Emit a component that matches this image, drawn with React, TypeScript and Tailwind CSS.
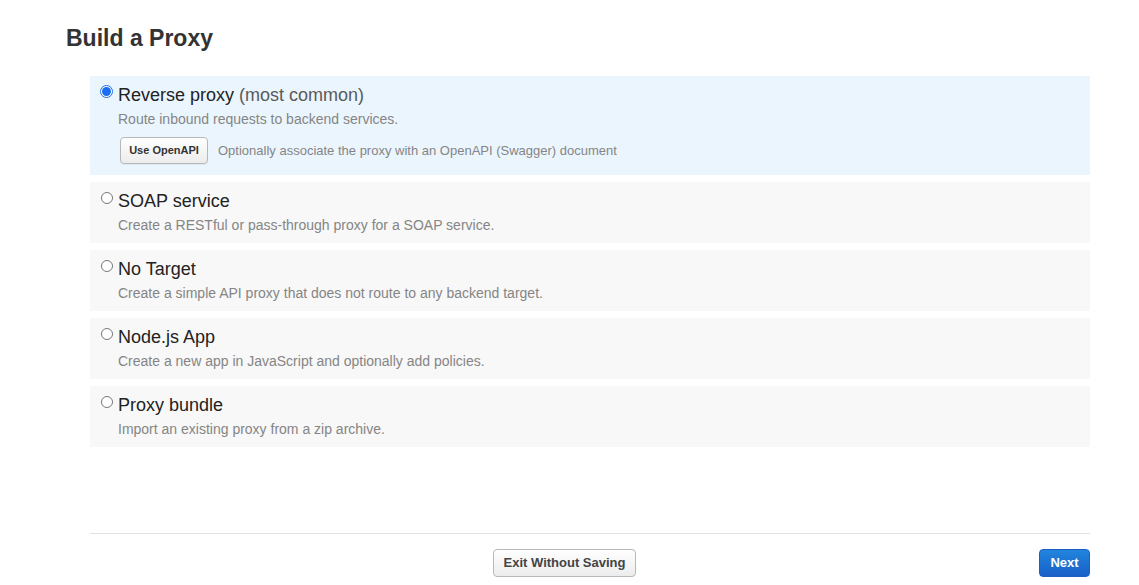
import React from "react";

type Opt = { title: string; extra?: string; desc: string; selected?: boolean; openapi?: boolean };

const options: Opt[] = [
  { title: "Reverse proxy", extra: "(most common)", desc: "Route inbound requests to backend services.", selected: true, openapi: true },
  { title: "SOAP service", desc: "Create a RESTful or pass-through proxy for a SOAP service." },
  { title: "No Target", desc: "Create a simple API proxy that does not route to any backend target." },
  { title: "Node.js App", desc: "Create a new app in JavaScript and optionally add policies." },
  { title: "Proxy bundle", desc: "Import an existing proxy from a zip archive." },
];

function Radio({ on }: { on?: boolean }) {
  if (on) {
    return (
      <span className="mt-[1px] flex h-[13px] w-[13px] shrink-0 items-center justify-center rounded-full border border-[#1f6fe6] bg-white">
        <span className="h-[9px] w-[9px] rounded-full bg-[#1a6cf0]" />
      </span>
    );
  }
  return (
    <span className="mt-[2px] ml-[1px] h-[12px] w-[12px] shrink-0 rounded-full border border-[#777] bg-white" />
  );
}

export default function App() {
  return (
    <div className="min-h-[585px] w-[1139px] bg-white pl-[66px] pr-[49px] pt-[24px] font-['Liberation_Sans',Arial,sans-serif]">
      <h1 className="text-[23px] font-bold leading-[28px] text-[#333]">Build a Proxy</h1>
      <div className="ml-[24px] mt-[24px] flex flex-col gap-[7px]">
        {options.map((o) => (
          <div
            key={o.title}
            className={`pl-[10px] pr-[10px] pt-[8px] ${o.openapi ? "pb-[11px]" : "pb-[9px]"} ${o.selected ? "bg-[#ebf5fe]" : "bg-[#f8f8f8]"}`}
          >
            <div className="flex items-start gap-[5px]">
              <Radio on={o.selected} />
              <div className="flex flex-col">
                <div className="text-[18px] leading-[22px] text-[#222]">
                  {o.title}
                  {o.extra && <span className="text-[#5a5a5a]"> {o.extra}</span>}
                </div>
                <div className="mt-[4px] text-[14px] leading-[18px] text-[#858585]">{o.desc}</div>
                {o.openapi && (
                  <div className="mt-[9px] ml-[2px] flex items-center gap-[10px]">
                    <button className="h-[27px] w-[88px] rounded-[4px] border border-[#b8b8b8] bg-gradient-to-b from-[#ffffff] to-[#ececec] text-[11px] font-bold text-[#333] shadow-[0_1px_0_rgba(0,0,0,0.05)]">
                      Use OpenAPI
                    </button>
                    <span className="text-[13px] text-[#858585]">
                      Optionally associate the proxy with an OpenAPI (Swagger) document
                    </span>
                  </div>
                )}
              </div>
            </div>
          </div>
        ))}
      </div>
      <div className="ml-[24px] mt-[86px] border-t border-[#e3e3e3] pt-[15px]">
        <div className="flex items-center">
          <button className="ml-[403px] h-[28px] w-[143px] rounded-[4px] border border-[#b8b8b8] bg-gradient-to-b from-[#ffffff] to-[#ececec] text-[13px] font-bold text-[#444]">
            Exit Without Saving
          </button>
          <button className="ml-auto h-[28px] w-[51px] rounded-[4px] border border-[#1a5fc4] bg-gradient-to-b from-[#2185dd] to-[#1a5fc8] text-[13px] font-bold text-white">
            Next
          </button>
        </div>
      </div>
    </div>
  );
}
